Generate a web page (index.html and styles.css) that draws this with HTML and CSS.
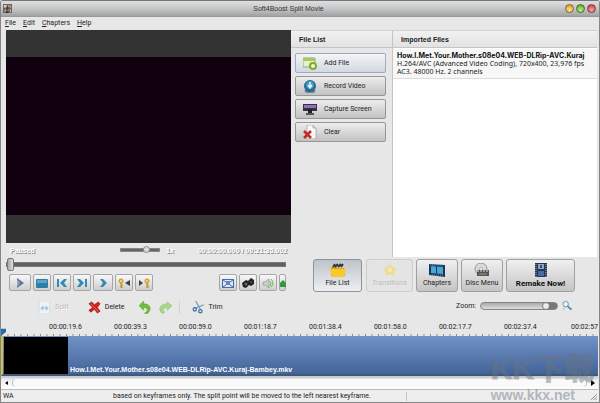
FILE: index.html
```
<!DOCTYPE html>
<html lang="en">
<head>
    <meta charset="UTF-8">
    <meta name="viewport" content="width=device-width, initial-scale=1.0">
    <title>Soft4Boost Split Movie</title>
    <link rel="stylesheet" href="styles.css">
</head>
<body>
    <header class="titlebar">
        <svg class="app-icon" viewBox="0 0 10 10"><rect width="10" height="10" fill="#6b655c"/><path d="M1 1h3v3H1zM6 1h1v3H6zM8 2h1v2H8zM2 6h1v3H2zM5 6h2v1H5zM8 6h1v3H8z" fill="#d8cfc0"/><path d="M4 3h2v3H4zM3 8h3v2H3z" fill="#3a3530"/></svg>
        <h1>Soft4Boost Split Movie</h1>
        <div class="window-buttons">
            <button class="win-btn win-min" aria-label="Minimize"></button>
            <button class="win-btn win-max" aria-label="Maximize"></button>
            <button class="win-btn win-close" aria-label="Close"></button>
        </div>
    </header>
    <nav class="menubar">
        <button><u>F</u>ile</button>
        <button><u>E</u>dit</button>
        <button><u>C</u>hapters</button>
        <button><u>H</u>elp</button>
    </nav>

    <main class="workspace">
        <section class="player">
            <div class="video"><div class="picture"></div></div>
            <div class="play-status">
                <span>Paused</span>
                <input type="range" class="speed" min="0" max="100" value="70" aria-label="Speed">
                <span>1x</span>
                <span class="time">00:00:00.000 / 00:21:35.002</span>
            </div>
            <input type="range" class="seek" min="0" max="100" value="0" aria-label="Position">
            <div class="transport">
                <button class="play" aria-label="Play"><svg viewBox="0 0 12 12"><path d="M3 1l7 5-7 5z" fill="#5b7699"/><path d="M3 2l3 4-3 4z" fill="#8fa6c4"/></svg></button>
                <button aria-label="Stop"><svg viewBox="0 0 12 12"><rect y="2" width="12" height="9" rx="1" fill="#2f7eaa"/><rect x="1" y="3" width="10" height="3" fill="#5ba3c8"/></svg></button>
                <button aria-label="Previous frame"><svg viewBox="0 0 12 12"><path d="M1 2h2v8H1zM8 2h3L8 6l3 4H8L4 6z" fill="#3489b3"/></svg></button>
                <button aria-label="Next frame"><svg viewBox="0 0 12 12"><path d="M9 2h2v8H9zM4 2H1l3 4-3 4h3l4-4z" fill="#3489b3"/></svg></button>
                <button class="next" aria-label="Next scene"><svg viewBox="0 0 12 12"><path d="M3 2h3l4 4-4 4H3l3-4z" fill="#3489b3"/></svg></button>
                <button aria-label="Previous keyframe"><svg viewBox="0 0 12 12"><circle cx="3" cy="4" r="2" fill="#f5d36b" stroke="#c58d1d"/><path d="M3 6v5M3 8h2M3 10h2" stroke="#c58d1d" stroke-width="1.2"/><path d="M12 3v6L7 6z" fill="#444"/></svg></button>
                <button aria-label="Next keyframe"><svg viewBox="0 0 12 12"><circle cx="9" cy="4" r="2" fill="#f5d36b" stroke="#c58d1d"/><path d="M9 6v5M9 8h2M9 10h2" stroke="#c58d1d" stroke-width="1.2"/><path d="M1 3v6l4-3z" fill="#444"/></svg></button>
                <span class="spacer"></span>
                <button aria-label="Full screen"><svg viewBox="0 0 12 12"><rect x=".5" y="2.500" width="11" height="8" fill="#dce6f5" stroke="#4a6ba3"/><rect x="4" y="4" width="4" height="4" fill="#6687bd"/><path d="M1 3l3 2M11 3L8 5M1 10l3-2M11 10L8 8" stroke="#4a6ba3"/></svg></button>
                <button aria-label="Snapshot"><svg viewBox="0 0 12 12"><path d="M0 6l4-3 2 1 3-3 3 2v4L9 9 7 8l-3 3-3-1z" fill="#222"/><circle cx="4" cy="7" r="1.500" fill="#666"/><circle cx="9" cy="5" r="1" fill="#555"/></svg></button>
                <button aria-label="Volume"><svg viewBox="0 0 12 12"><path d="M1 5h2l4-3v9L3 8H1z" fill="#c9d2c9" stroke="#889688" stroke-width=".7"/><path d="M8 4q2 2 0 5M9 2q4 4 0 8" fill="none" stroke="#69bd58"/></svg></button>
                <button class="level" aria-label="Volume level"><svg viewBox="0 0 6 12"><path d="M0 6l3-3 3 3v4H0z" fill="#2d9b3c"/></svg></button>
            </div>
            <div class="edit-tools">
                <button class="split" disabled><svg viewBox="0 0 12 12"><rect x="1" width="10" height="12" fill="#edf3f8" stroke="#d3dee7"/><path d="M2 7l3-3v2h2V4l3 3-3 2V7H5v2z" fill="#a7c5da"/></svg>Split</button>
                <button class="delete"><svg viewBox="0 0 14 14"><path d="M1 3l3-2 3 3 4-3 2 2-3 4 3 4-3 2-3-4-4 3-2-2 4-3z" fill="#d3211c" stroke="#8c1612" stroke-width=".7"/><path d="M3 3l8 8" stroke="#f06a5c"/></svg>Delete</button>
                <button class="undo" aria-label="Undo"><svg viewBox="0 0 14 14"><path d="M0 5l5-5v3c7 0 9 5 5 10-1 1-4 1-4 0 4-2 4-6-1-6v3z" fill="#6fbd38" stroke="#519b27" stroke-width=".5"/></svg></button>
                <button class="redo" aria-label="Redo"><svg viewBox="0 0 14 14"><path d="M14 5L9 1v2C2 3-1 8 2 12c1 2 4 1 4 0-3-2-1-5 3-5v3z" fill="#a8d68b" stroke="#85bd66" stroke-width=".5"/></svg></button>
                <button class="trim"><svg viewBox="0 0 14 14"><path d="M4 0l5 9M13 4L3 8" stroke="#7b9bbf" stroke-width="1.300"/><circle cx="3" cy="9" r="1.800" fill="none" stroke="#3b6da8" stroke-width="1.300"/><circle cx="9" cy="11" r="1.800" fill="none" stroke="#3b6da8" stroke-width="1.300"/></svg>Trim</button>
            </div>
        </section>

        <section class="files">
            <div class="panels">
                <div class="file-actions">
                    <h2>File List</h2>
                    <div class="action-list">
                        <button class="active"><svg viewBox="0 0 14 14"><path d="M0 2h12v9H0z" fill="#e8efcc" stroke="#9cab70"/><path d="M0 2h12v3H0z" fill="#acc65e"/><circle cx="10" cy="10" r="4" fill="#7eae25"/><circle cx="10" cy="10" r="2" fill="#eef6dc"/></svg>Add File</button>
                        <button><svg viewBox="0 0 14 14"><path d="M1 11h12l-2 3H3z" fill="#718391"/><circle cx="7" cy="7" r="6" fill="#266995"/><circle cx="7" cy="6" r="4" fill="#4799c0"/><path d="M7 3v5M5 6l2 3 2-3" stroke="#e5f4fa" stroke-width="1.500" fill="none"/></svg>Record Video</button>
                        <button><svg viewBox="0 0 14 14"><path d="M0 2h14v7H0z" fill="#382f49"/><path d="M1 3h12v3H1z" fill="#9171b5"/><path d="M5 7h4v4H5z" fill="#222"/><path d="M3 12h8" stroke="#555" stroke-width="2"/></svg>Capture Screen</button>
                        <button><svg viewBox="0 0 14 14"><path d="M4 0h6l3 3v11H4z" fill="#f8f8f8" stroke="#999" stroke-width=".7"/><path d="M10 0v3h3" fill="#ddd" stroke="#999" stroke-width=".7"/><path d="M1 6l7 7M8 6l-7 7" stroke="#c02922" stroke-width="2.500"/></svg>Clear</button>
                    </div>
                </div>
                <div class="imported">
                    <h2>Imported Files</h2>
                    <div class="import-list">
                        <div class="import-item">
                            <strong>How.I.Met.Your.Mother.s08e04.WEB-DLRip-AVC.Kuraj</strong>
                            <p>H.264/AVC (Advanced Video Coding), 720x400, 23,976 fps</p>
                            <p>AC3. 48000 Hz. 2 channels</p>
                        </div>
                    </div>
                </div>
            </div>
            <div class="steps">
                <button class="step-files"><svg viewBox="0 0 16 14"><path d="M1 4h5l1 1h7l1 8H1z" fill="#dda016"/><path d="M0 6h16l-2 8H2z" fill="#fac829"/><path d="M3 4l2-3M5 4l3-3M8 4l3-3M11 4l2-3" stroke="#333" stroke-width="1.800"/></svg>File List</button>
                <button class="step-transitions" disabled><svg viewBox="0 0 16 14"><path d="M8 0l2 4 5 1-3 4 1 4-5-2-5 2 1-4-3-4 5-1z" fill="#f3da70"/><circle cx="8" cy="7" r="2" fill="#faeeb0"/></svg>Transitions</button>
                <button class="step-chapters"><svg viewBox="0 0 16 14"><path d="M0 1l16 1v12L0 12z" fill="#15395a"/><path d="M2 3l5 .5v7L2 10zM8 3.500l6 .5v7l-6-.5z" fill="#49a7d2"/><path d="M1 2h14M1 12h14" stroke="#8bb0c6" stroke-width=".8" stroke-dasharray="1 1"/></svg>Chapters</button>
                <button class="step-disc"><svg viewBox="0 0 16 14"><circle cx="7" cy="6" r="6" fill="#d4dcd8" stroke="#909a96"/><circle cx="7" cy="6" r="1.500" fill="#fff" stroke="#888" stroke-width=".6"/><path d="M3 7h12v6H3z" fill="#565656"/><path d="M3 8h12" stroke="#ddd" stroke-dasharray="2 1"/><path d="M5 11h8" stroke="#999"/></svg>Disc Menu</button>
                <button class="remake"><svg viewBox="0 0 16 14"><path d="M2 0h12v14H2z" fill="#27364f"/><path d="M5 1h6v5H5z" fill="#8ba5cf"/><path d="M5 8h6v5H5z" fill="#4969a0"/><path d="M3 1v13M13 1v13" stroke="#a9b1c0" stroke-dasharray="1 1"/><path d="M7 2h2v3H7z" fill="#354d78"/></svg>Remake Now!</button>
            </div>
            <div class="zoom">
                <label for="zoom">Zoom:</label>
                <input type="range" id="zoom" min="0" max="100" value="90">
                <svg viewBox="0 0 12 12"><circle cx="4" cy="4" r="3" fill="#e6f2f8" stroke="#5e93b3"/><path d="M6 6l4 4" stroke="#457895" stroke-width="1.500"/><path d="M1 10l2-2M9 8l2 1" stroke="#85aabd"/></svg>
            </div>
        </section>
    </main>

    <section class="timeline">
        <div class="ruler">
            <svg class="playhead" viewBox="0 0 6 8"><path d="M0 0h6v4L1 8H0z" fill="#2b6ba4"/></svg>
            <span>00:00:19.6</span><span>00:00:39.3</span><span>00:00:59.0</span><span>00:01:18.7</span><span>00:01:38.4</span><span>00:01:58.0</span><span>00:02:17.7</span><span>00:02:37.4</span><span>00:02:57</span>
        </div>
        <div class="track">
            <div class="thumb"></div>
            <strong>How.I.Met.Your.Mother.s08e04.WEB-DLRip-AVC.Kuraj-Bambey.mkv</strong>
        </div>
        <div class="scrollbar">
            <button aria-label="Scroll left"><svg viewBox="0 0 4 6"><path d="M4 1v4L1 3z"/></svg></button>
            <div class="scroll-thumb"></div>
            <button aria-label="Scroll right"><svg viewBox="0 0 4 6"><path d="M0 0v6l4-3z"/></svg></button>
        </div>
    </section>
    <footer class="statusbar">
        <span class="warning">WA</span>
        <span class="message">based on keyframes only. The split point will be moved to the left nearest keyframe.</span>
        <svg class="grip" viewBox="0 0 8 8"><path d="M1 8l7-7M4 8l4-4M7 8l1-1" stroke="#888"/></svg>
    </footer>
    <div class="watermark">
        <span class="mark">KK下载</span>
        <span class="site">www.kkx.net</span>
    </div>
</body>
</html>
```
FILE: styles.css
```
* {
    box-sizing: border-box;
}
body {
    margin: 0;
    min-height: 100vh;
    display: flex;
    flex-direction: column;
    position: relative;
    overflow: hidden;
    font-family: Roboto, "Liberation Sans", Arial, sans-serif;
    font-size: 7px;
    line-height: 9px;
    color: #222;
    background: #e7e7e7;
    border: 1px solid #858585;
    border-top-color: #777;
    border-radius: 3px 3px 0 0;
}
h1, h2, p {
    margin: 0;
    font-size: 7px;
}
button {
    display: flex;
    align-items: center;
    padding: 0;
    border: none;
    background: none;
    font: inherit;
    color: inherit;
    white-space: nowrap;
}
svg {
    display: block;
    flex: none;
}
input[type="range"] {
    -webkit-appearance: none;
    appearance: none;
    margin: 0;
    background: none;
}

/* title and menu */
.titlebar {
    height: 16px;
    padding: 0 3px 0 2px;
    display: flex;
    align-items: center;
    background: linear-gradient(#dedede, #c9cacb 45%, #a1a2a3);
    border-bottom: 1px solid #999;
}
.titlebar h1 {
    flex: 1;
    text-align: center;
    font-family: "Liberation Sans", Arial, sans-serif;
    font-weight: normal;
    color: #333;
}
.app-icon {
    width: 9px;
    height: 9px;
}
.window-buttons {
    display: flex;
    gap: 2px;
}
.win-btn {
    width: 9px;
    height: 9px;
    border-radius: 50%;
    border: 1px solid #7d6630;
}
.win-min {
    background: radial-gradient(circle at 50% 75%, #ffe98c, #d38c18);
}
.win-max {
    border-color: #467329;
    background: radial-gradient(circle at 50% 75%, #c4ef84, #4b962c);
}
.win-close {
    border-color: #873b43;
    background: radial-gradient(circle at 50% 75%, #f8a7aa, #b92f3d);
}
.menubar {
    display: flex;
    gap: 7px;
    height: 13px;
    padding-left: 4px;
}

/* player */
.workspace {
    display: grid;
    grid-template-columns: 285fr 306fr;
    padding: 0 2px 0 5px;
}
.video {
    aspect-ratio: 285 / 213;
    padding: 27px 0 28px;
    background: #333;
}
.picture {
    height: 100%;
    background: #120010;
}
.play-status {
    display: flex;
    align-items: center;
    height: 14px;
    padding: 0 4px;
    gap: 6px;
    font-family: "Liberation Sans", Arial, sans-serif;
    font-weight: bold;
    color: #fff;
    text-shadow: 1px 1px 0 #888;
}
.play-status .speed {
    width: 40px;
    height: 8px;
    margin-left: auto;
}
.time {
    margin-left: 18px;
}
.speed::-webkit-slider-runnable-track {
    height: 4px;
    background: #666;
    border: 1px solid #888;
}
.speed::-webkit-slider-thumb {
    -webkit-appearance: none;
    width: 7px;
    height: 7px;
    margin-top: -3px;
    border: 1px solid #888;
    border-radius: 50%;
    background: #ddd;
}
.seek {
    display: block;
    width: calc(100% - 5px);
    height: 15px;
}
.seek::-webkit-slider-runnable-track {
    height: 5px;
    background: #606060;
    border: 1px solid #777;
}
.seek::-webkit-slider-thumb {
    -webkit-appearance: none;
    width: 7px;
    height: 13px;
    margin-top: -5px;
    border: 1px solid #777;
    border-radius: 2px;
    background: linear-gradient(90deg, #aaa, #ddd);
}
.transport {
    display: flex;
    gap: 2px;
    margin-top: 2px;
    padding: 0 5px 0 3px;
}
.transport button {
    width: 18px;
    height: 17px;
    justify-content: center;
    border: 1px solid #a6a6a6;
    border-radius: 2px;
    background: linear-gradient(#f8f8f8, #cecece);
}
.transport svg {
    width: 12px;
    height: 12px;
}
.transport .play {
    width: 22px;
}
.transport .next {
    width: 20px;
}
.transport .level {
    width: 7px;
}
.transport .level svg {
    width: 6px;
}
.spacer {
    flex: 1;
}
.edit-tools {
    display: flex;
    align-items: center;
    height: 32px;
    padding-left: 32px;
}
.edit-tools button {
    gap: 4px;
}
.edit-tools svg {
    width: 13px;
    height: 13px;
}
.edit-tools .split {
    color: #b9b9b9;
    text-shadow: 1px 1px 0 #fff;
}
.edit-tools .delete {
    margin-left: 19px;
}
.edit-tools .undo {
    margin-left: 14px;
}
.edit-tools .redo {
    margin-left: 7px;
    padding-right: 7px;
    border-right: 1px solid #d3d3d3;
}
.edit-tools .trim {
    margin-left: 12px;
}

/* file panels */
.panels {
    display: grid;
    grid-template-columns: 101px 1fr;
    height: 227px;
}
.panels h2 {
    height: 18px;
    padding: 4px 8px;
    border-top: 1px solid #d2d2d2;
    border-bottom: 1px solid #c4c4c4;
    background: linear-gradient(#f1f1f1, #e2e2e2);
    font-family: "Liberation Sans", Arial, sans-serif;
    color: #222;
}
.action-list {
    display: flex;
    flex-direction: column;
    gap: 3px;
    padding: 5px 6px 0 4px;
}
.action-list button {
    height: 20px;
    gap: 7px;
    padding-left: 7px;
    border: 1px solid #969696;
    border-radius: 2px;
    background: linear-gradient(#ededed, #c2c2c2);
}
.action-list .active {
    border-color: #9eabc1;
    background: linear-gradient(#f3f4f6, #d2d8e2);
}
.action-list svg {
    width: 14px;
    height: 14px;
}
.imported {
    display: flex;
    flex-direction: column;
    min-width: 0;
    border-left: 1px solid #c4c4c4;
}
.import-list {
    flex: 1;
    padding-top: 1px;
    background: #fff;
}
.import-item {
    padding: 3px 1px 2px 4px;
    font-family: "Noto Sans", sans-serif;
    line-height: 8px;
    white-space: nowrap;
    background: #f7f7f7;
    border-bottom: 1px solid #ddd;
}
.import-item strong {
    display: block;
    font-family: Inter, sans-serif;
    color: #111;
}
.steps {
    display: flex;
    justify-content: flex-end;
    gap: 3px;
    padding: 2px 22px 0 0;
}
.steps button {
    height: 33px;
    flex-direction: column;
    justify-content: center;
    gap: 2px;
    border: 1px solid #a0a0a0;
    border-radius: 3px;
    background: linear-gradient(#f0f0f0, #c4c4c4);
}
.steps svg {
    width: 16px;
    height: 14px;
}
.steps .step-files {
    width: 49px;
    margin-right: 1px;
    border-color: #8c949f;
    background: linear-gradient(#bec3ca, #eeeff1);
}
.steps .step-transitions {
    width: 47px;
    color: #bebebe;
    background: #e4e4e4;
    border-color: #cecece;
}
.step-transitions svg {
    opacity: 0.7;
}
.steps .step-chapters,
.steps .step-disc {
    width: 42px;
}
.steps .remake {
    width: 69px;
    font-size: 8px;
    font-weight: bold;
    color: #111;
}
.zoom {
    display: flex;
    justify-content: flex-end;
    align-items: center;
    gap: 4px;
    padding: 8px 24px 0 0;
}
.zoom input {
    width: 78px;
    height: 9px;
}
.zoom svg {
    width: 11px;
    height: 12px;
}
.zoom input::-webkit-slider-runnable-track {
    height: 8px;
    border: 1px solid #858585;
    border-radius: 4px;
    background: linear-gradient(90deg, transparent 85%, #777 85%), linear-gradient(#aaa, #ddd);
}
.zoom input::-webkit-slider-thumb {
    -webkit-appearance: none;
    width: 8px;
    height: 8px;
    margin-top: -1px;
    border: 1px solid #777;
    border-radius: 50%;
    background: #eee;
}

/* timeline */
.timeline {
    margin: 0 1px 0 0;
}
.ruler {
    position: relative;
    display: flex;
    height: 13px;
    padding-left: 32px;
    overflow: hidden;
    background: linear-gradient(90deg, #888 1px, transparent 1px) 0 100% / 1.09% 2px repeat-x;
}
.ruler span {
    flex: 0 0 11.5%;
    text-align: center;
}
.ruler span:last-child {
    flex: 1;
    text-align: right;
}
.playhead {
    position: absolute;
    left: 0;
    bottom: 0;
    width: 5px;
    height: 8px;
}
.track {
    display: flex;
    align-items: flex-end;
    height: 40px;
    padding: 1px 0 0 1px;
    border-left: 2px solid #d2c244;
    border-bottom: 2px solid #405979;
    background: linear-gradient(#7192c7, #426498);
    color: #fff;
}
.track .thumb {
    align-self: stretch;
    width: 64px;
    margin-right: 2px;
    background: #000;
}
.track strong {
    font-family: "Liberation Sans", Arial, sans-serif;
}
.scrollbar {
    display: flex;
    align-items: center;
    height: 14px;
    padding: 2px 3px;
    gap: 4px;
    background: linear-gradient(#bfc4c9, #eee 30%, #fff);
    border-bottom: 1px solid #bbb;
}
.scrollbar svg {
    width: 4px;
    height: 6px;
}
.scroll-thumb {
    flex: 1;
    height: 8px;
    border: 1px solid #bbb;
    border-width: 0 1px;
    border-radius: 4px;
    background: #fafafa;
}
.statusbar {
    display: flex;
    align-items: center;
    height: 12px;
    padding: 0 2px;
    background: #eee;
}
.warning {
    width: 110px;
}
.message {
    width: 294px;
    border-right: 1px solid #c4c4c4;
}
.grip {
    width: 7px;
    height: 7px;
    margin-left: auto;
}
.watermark {
    position: absolute;
    right: 5px;
    bottom: -1px;
    display: flex;
    flex-direction: column;
    color: #6b7382;
    font-family: "Liberation Sans", "Noto Sans CJK SC", sans-serif;
    font-weight: bold;
    opacity: 0.45;
    pointer-events: none;
}
.mark {
    font-size: 30px;
    line-height: 36px;
    -webkit-text-stroke: 1px #6b7382;
}
.site {
    font-size: 14px;
    line-height: 16px;
}
```
